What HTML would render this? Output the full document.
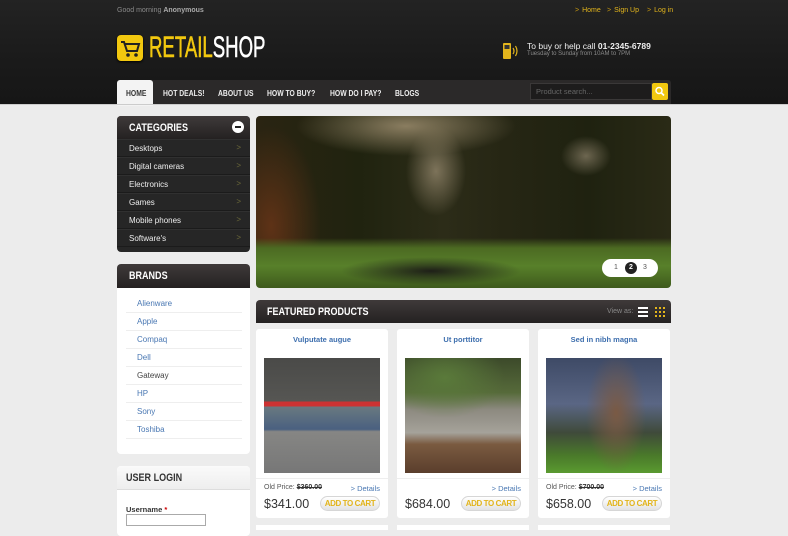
<!DOCTYPE html>
<html><head><meta charset="utf-8"><style>
*{margin:0;padding:0;box-sizing:border-box}
body{width:788px;height:528px;overflow:hidden;background:#ececec;font-family:"Liberation Sans",Arial,sans-serif;position:relative}
.abs{position:absolute}
#hdr{left:0;top:0;width:788px;height:104px;background:linear-gradient(#232323,#1a1a1a 60%,#161616)}
.top{top:7px;font-size:7px;color:#8a8a8a}
.top b{color:#aaa}
.tl{top:7px;font-size:7px;color:#e3b51c}
.tl span{color:#c99a10;margin-right:3px}
.cond{display:inline-block;transform-origin:left center;font-weight:bold;white-space:nowrap}
#nav{left:117px;top:80px;width:554px;height:24px;background:#2b2929;border-radius:3px 3px 0 0}
.ni{top:88px;font-size:8.5px;color:#eee;font-weight:bold;transform:scaleX(.8);transform-origin:left;white-space:nowrap}
.panel{background:#262626;border-radius:4px}
.ph{background:linear-gradient(#3f3a3a,#242121);color:#fff;font-weight:bold;font-size:11px}
.cat{position:absolute;left:0;width:133px;height:18px;border-bottom:1px solid #1b1b1b;border-top:1px solid #303030;color:#eee;font-size:8px;padding:4px 0 0 12px}
.cat i{position:absolute;right:9px;top:3px;color:#6d6a3a;font-style:normal;font-size:8px}
.br{position:absolute;left:9px;width:116px;height:18px;border-bottom:1px solid #eee;font-size:8px;color:#4a78b3;padding:4px 0 0 11px}
.card{background:#fff;border-radius:3px;width:132px;height:189px;top:329px}
.card .t{position:absolute;top:6px;width:100%;text-align:center;font-size:7.5px;font-weight:bold;color:#3e6fae}
.card .im{position:absolute;left:8px;top:29px;width:116px;height:115px}
.card .ln{position:absolute;left:0;top:149px;width:100%;border-top:1px solid #eee}
.card .op{position:absolute;left:8px;top:155px;font-size:7px;color:#555}
.card .op s{color:#333;font-weight:bold}
.card .dt{position:absolute;right:8px;top:155px;font-size:7.5px;color:#4a78b3}
.card .pr{position:absolute;left:8px;top:168px;font-size:12.5px;color:#333}
.card .ac{position:absolute;right:8px;top:167px;width:60px;height:15px;border-radius:8px;background:linear-gradient(#fff,#e2e2e2);border:1px solid #d6d6d6;color:#e2b41a;font-size:8px;font-weight:bold;text-align:center;line-height:13px;white-space:nowrap;letter-spacing:-.4px;overflow:hidden}
</style></head><body>
<div id="hdr" class="abs"></div>
<div class="abs top" style="left:117px">Good morning <b>Anonymous</b></div>
<div class="abs tl" style="left:575px"><span>&gt;</span>Home</div>
<div class="abs tl" style="left:607px"><span>&gt;</span>Sign Up</div>
<div class="abs tl" style="left:647px"><span>&gt;</span>Log in</div>
<div class="abs" style="left:117px;top:35px;width:26px;height:26px;background:#f2c80f;border-radius:4px;box-shadow:0 1px 2px #000">
<svg width="26" height="26" viewBox="0 0 26 26"><path d="M4 7h3l3 9h10l2-7H8" fill="none" stroke="#222" stroke-width="2"/><circle cx="11" cy="20" r="1.8" fill="#222"/><circle cx="19" cy="20" r="1.8" fill="#222"/></svg></div>
<div class="abs" style="left:149px;top:31px;font-size:30px;line-height:34px"><span class="cond" style="transform:scaleX(.62);font-weight:normal;-webkit-text-stroke:.6px"><span style="color:#f2c80f">RETAIL</span><span style="color:#fff">SHOP</span></span></div>
<svg class="abs" style="left:502px;top:42px" width="20" height="18" viewBox="0 0 20 18"><rect x="1" y="1" width="8" height="16" rx="1" fill="#e3b51c"/><rect x="2.5" y="3" width="5" height="4" fill="#333"/><path d="M11 6q2 3 0 6M13.5 4q3 5 0 10" stroke="#e3b51c" fill="none" stroke-width="1.2"/></svg>
<div class="abs" style="left:527px;top:41px;font-size:8.5px;color:#eee">To buy or help call <b>01-2345-6789</b></div>
<div class="abs" style="left:527px;top:51px;font-size:6px;color:#8a8a8a">Tuesday to Sunday from 10AM to 7PM</div>
<div id="nav" class="abs"></div>
<div class="abs" style="left:117px;top:80px;width:36px;height:26px;background:#f3f3f3;border-radius:3px 3px 0 0"></div>
<div class="abs ni" style="left:126px;color:#333">HOME</div>
<div class="abs ni" style="left:163px">HOT DEALS!</div>
<div class="abs ni" style="left:218px">ABOUT US</div>
<div class="abs ni" style="left:267px">HOW TO BUY?</div>
<div class="abs ni" style="left:330px">HOW DO I PAY?</div>
<div class="abs ni" style="left:395px">BLOGS</div>
<div class="abs" style="left:530px;top:83px;width:122px;height:17px;background:#1d1c1c;border:1px solid #3a3838;font-size:7.5px;color:#666;padding:3px 5px">Product search...</div>
<div class="abs" style="left:652px;top:83px;width:16px;height:17px;background:#f2c80f;border-radius:2px"><svg width="16" height="17"><circle cx="7" cy="7.5" r="3" stroke="#fff" stroke-width="1.5" fill="none"/><path d="M9 9.5l3 3" stroke="#fff" stroke-width="1.8"/></svg></div>
<div class="abs" style="left:0;top:104px;width:788px;height:1px;background:#ccc"></div>

<div class="abs panel" style="left:117px;top:116px;width:133px;height:136px"></div>
<div class="abs ph" style="left:117px;top:116px;width:133px;height:23px;border-radius:4px 4px 0 0;padding:6px 12px"><span class="cond" style="transform:scaleX(.82)">CATEGORIES</span></div>
<div class="abs" style="left:232px;top:121px;width:12px;height:12px;border-radius:50%;background:#fff"><div style="position:absolute;left:3px;top:5px;width:6px;height:2px;background:#222"></div></div>
<div class="abs" style="left:117px;top:0">
<div class="cat" style="top:139px">Desktops<i>&gt;</i></div>
<div class="cat" style="top:157px">Digital cameras<i>&gt;</i></div>
<div class="cat" style="top:175px">Electronics<i>&gt;</i></div>
<div class="cat" style="top:193px">Games<i>&gt;</i></div>
<div class="cat" style="top:211px">Mobile phones<i>&gt;</i></div>
<div class="cat" style="top:229px">Software's<i>&gt;</i></div>
</div>

<div class="abs" style="left:117px;top:264px;width:133px;height:190px;background:#fff;border-radius:4px"></div>
<div class="abs ph" style="left:117px;top:264px;width:133px;height:24px;border-radius:4px 4px 0 0;padding:6px 12px"><span class="cond" style="transform:scaleX(.82)">BRANDS</span></div>
<div class="abs" style="left:117px;top:0">
<div class="br" style="top:295px">Alienware</div>
<div class="br" style="top:313px">Apple</div>
<div class="br" style="top:331px">Compaq</div>
<div class="br" style="top:349px">Dell</div>
<div class="br" style="top:367px;color:#444">Gateway</div>
<div class="br" style="top:385px">HP</div>
<div class="br" style="top:403px">Sony</div>
<div class="br" style="top:421px">Toshiba</div>
</div>

<div class="abs" style="left:117px;top:466px;width:133px;height:70px;background:#fff;border-radius:4px"></div>
<div class="abs" style="left:117px;top:466px;width:133px;height:24px;background:linear-gradient(#fafafa,#eee);border-bottom:1px solid #ddd;border-radius:4px 4px 0 0;padding:6px 9px;color:#333;font-size:11px"><span class="cond" style="transform:scaleX(.82)">USER LOGIN</span></div>
<div class="abs" style="left:126px;top:505px;font-size:7.5px;font-weight:bold;color:#333">Username <span style="color:#c00">*</span></div>
<div class="abs" style="left:126px;top:514px;width:80px;height:12px;border:1px solid #aaa;background:#fff"></div>

<div class="abs" style="left:256px;top:116px;width:415px;height:172px;border-radius:4px;overflow:hidden;background:
radial-gradient(ellipse 110px 30px at 150px 10px,#8a7d60,transparent),
radial-gradient(ellipse 30px 45px at 180px 55px,#7d735a,transparent),
radial-gradient(ellipse 25px 20px at 330px 40px,#6d6650,transparent),
radial-gradient(ellipse 90px 14px at 175px 155px,#1e1f18,transparent),
linear-gradient(180deg,transparent 0,transparent 122px,#4c6a22 132px,#58802a 150px,#3e5a1c 172px),
radial-gradient(ellipse 50px 100px at 15px 110px,#5e3216,transparent),
linear-gradient(90deg,#2a2412,#20230f 25%,#2c2c18 45%,#262614 60%,#1f2210 80%,#2a2a16)">
<div style="position:absolute;left:346px;top:143px;width:56px;height:18px;border-radius:9px;background:#fff"></div>
<div style="position:absolute;left:358px;top:148px;font-size:7px;color:#555">1</div>
<div style="position:absolute;left:369px;top:146px;width:12px;height:12px;border-radius:50%;background:#222;color:#fff;font-size:7px;font-weight:bold;text-align:center;line-height:12px">2</div>
<div style="position:absolute;left:387px;top:148px;font-size:7px;color:#555">3</div>
</div>

<div class="abs ph" style="left:256px;top:300px;width:415px;height:23px;border-radius:4px 4px 0 0;padding:6px 11px"><span class="cond" style="transform:scaleX(.82)">FEATURED PRODUCTS</span></div>
<div class="abs" style="left:607px;top:308px;font-size:7px;color:#888">View as:</div>
<svg class="abs" style="left:638px;top:306px" width="32" height="12"><rect x="0" y="1" width="10" height="2" fill="#fff"/><rect x="0" y="5" width="10" height="2" fill="#fff"/><rect x="0" y="9" width="10" height="2" fill="#fff"/><g fill="#e3b51c"><rect x="17" y="1" width="2" height="2"/><rect x="21" y="1" width="2" height="2"/><rect x="25" y="1" width="2" height="2"/><rect x="17" y="5" width="2" height="2"/><rect x="21" y="5" width="2" height="2"/><rect x="25" y="5" width="2" height="2"/><rect x="17" y="9" width="2" height="2"/><rect x="21" y="9" width="2" height="2"/><rect x="25" y="9" width="2" height="2"/></g></svg>

<div class="abs card" style="left:256px"><div class="t">Vulputate augue</div>
<div class="im" style="background:linear-gradient(180deg,transparent 0,transparent 38%,#c33 38%,#c33 42%,#6a7a80 42%,#4a6080 62%,#868684 64%,#777 100%),linear-gradient(180deg,#4a4a48,#6a6a66)"></div>
<div class="ln"></div><div class="op">Old Price: <s>$360.00</s></div><div class="dt">&gt; Details</div><div class="pr">$341.00</div><div class="ac">ADD TO CART</div></div>
<div class="abs card" style="left:397px"><div class="t">Ut porttitor</div>
<div class="im" style="background:radial-gradient(ellipse 60px 40px at 40px 20px,#5a7a3a,transparent),linear-gradient(180deg,#3c4a2a 0,#566a3a 30%,#8d8a80 45%,#a5a29a 65%,#7a5a40 75%,#5a3e2c 100%)"></div>
<div class="ln"></div><div class="dt">&gt; Details</div><div class="pr">$684.00</div><div class="ac">ADD TO CART</div></div>
<div class="abs card" style="left:538px"><div class="t">Sed in nibh magna</div>
<div class="im" style="background:radial-gradient(ellipse 30px 60px at 70px 55px,#7a5a44,transparent),linear-gradient(180deg,#3e4a66 0,#5a6684 40%,#3f4a3a 65%,#4a7a2a 85%,#5a9a30 100%)"></div>
<div class="ln"></div><div class="op">Old Price: <s>$700.00</s></div><div class="dt">&gt; Details</div><div class="pr">$658.00</div><div class="ac">ADD TO CART</div></div>
<div class="abs" style="left:256px;top:525px;width:132px;height:5px;background:#fff"></div>
<div class="abs" style="left:397px;top:525px;width:132px;height:5px;background:#fff"></div>
<div class="abs" style="left:538px;top:525px;width:132px;height:5px;background:#fff"></div>
</body></html>
